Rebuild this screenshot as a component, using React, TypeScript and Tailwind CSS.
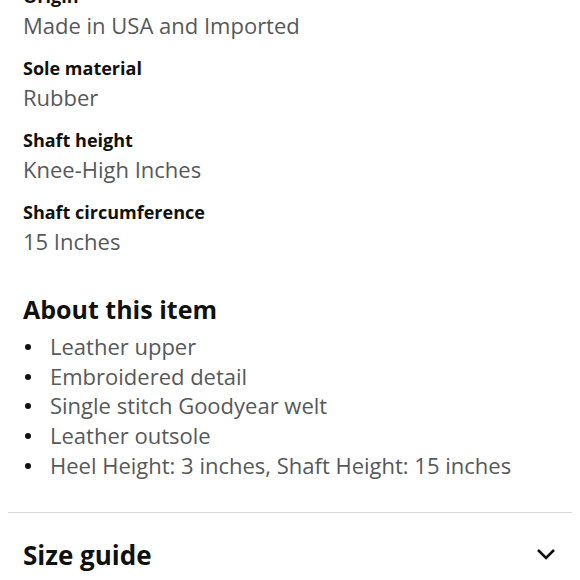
import React from "react";

const specs = [
  ["Origin", "Made in USA and Imported"],
  ["Sole material", "Rubber"],
  ["Shaft height", "Knee-High Inches"],
  ["Shaft circumference", "15 Inches"],
];

const bullets = [
  "Leather upper",
  "Embroidered detail",
  "Single stitch Goodyear welt",
  "Leather outsole",
  "Heel Height: 3 inches, Shaft Height: 15 inches",
];

export default function App() {
  return (
    <div className="w-[580px] h-[580px] overflow-hidden bg-white font-['Open_Sans',sans-serif]">
      <div className="mt-[-17px] px-[23px]">
        {specs.map(([k, v]) => (
          <div key={k} className="mb-[15px]">
            <div className="text-[18px] leading-[27px] font-bold text-[#0f1111]">{k}</div>
            <div className="text-[22px] leading-[30px] text-[#565959]">{v}</div>
          </div>
        ))}
        <h2 className="mt-[36px] text-[25px] leading-[34px] font-bold text-[#0f1111]">About this item</h2>
        <ul className="mt-[6px]">
          {bullets.map((b) => (
            <li key={b} className="flex items-center text-[22px] leading-[29.7px] text-[#565959]">
              <span className="ml-[2px] mr-[19px] w-[6px] h-[6px] rounded-full bg-[#0f1111] shrink-0" />
              <span>{b}</span>
            </li>
          ))}
        </ul>
      </div>
      <div className="mt-[31px] mx-[8px] h-px bg-[#d5d9d9]" />
      <div className="mt-[25px] pl-[23px] pr-[24px] flex items-center justify-between">
        <h2 className="text-[26px] leading-[34px] font-bold text-[#0f1111]">Size guide</h2>
        <svg width="20" height="14" viewBox="0 0 20 14" className="mt-[-2px]">
          <polyline points="2,3 10,11 18,3" fill="none" stroke="#0f1111" strokeWidth="2.6" />
        </svg>
      </div>
    </div>
  );
}
